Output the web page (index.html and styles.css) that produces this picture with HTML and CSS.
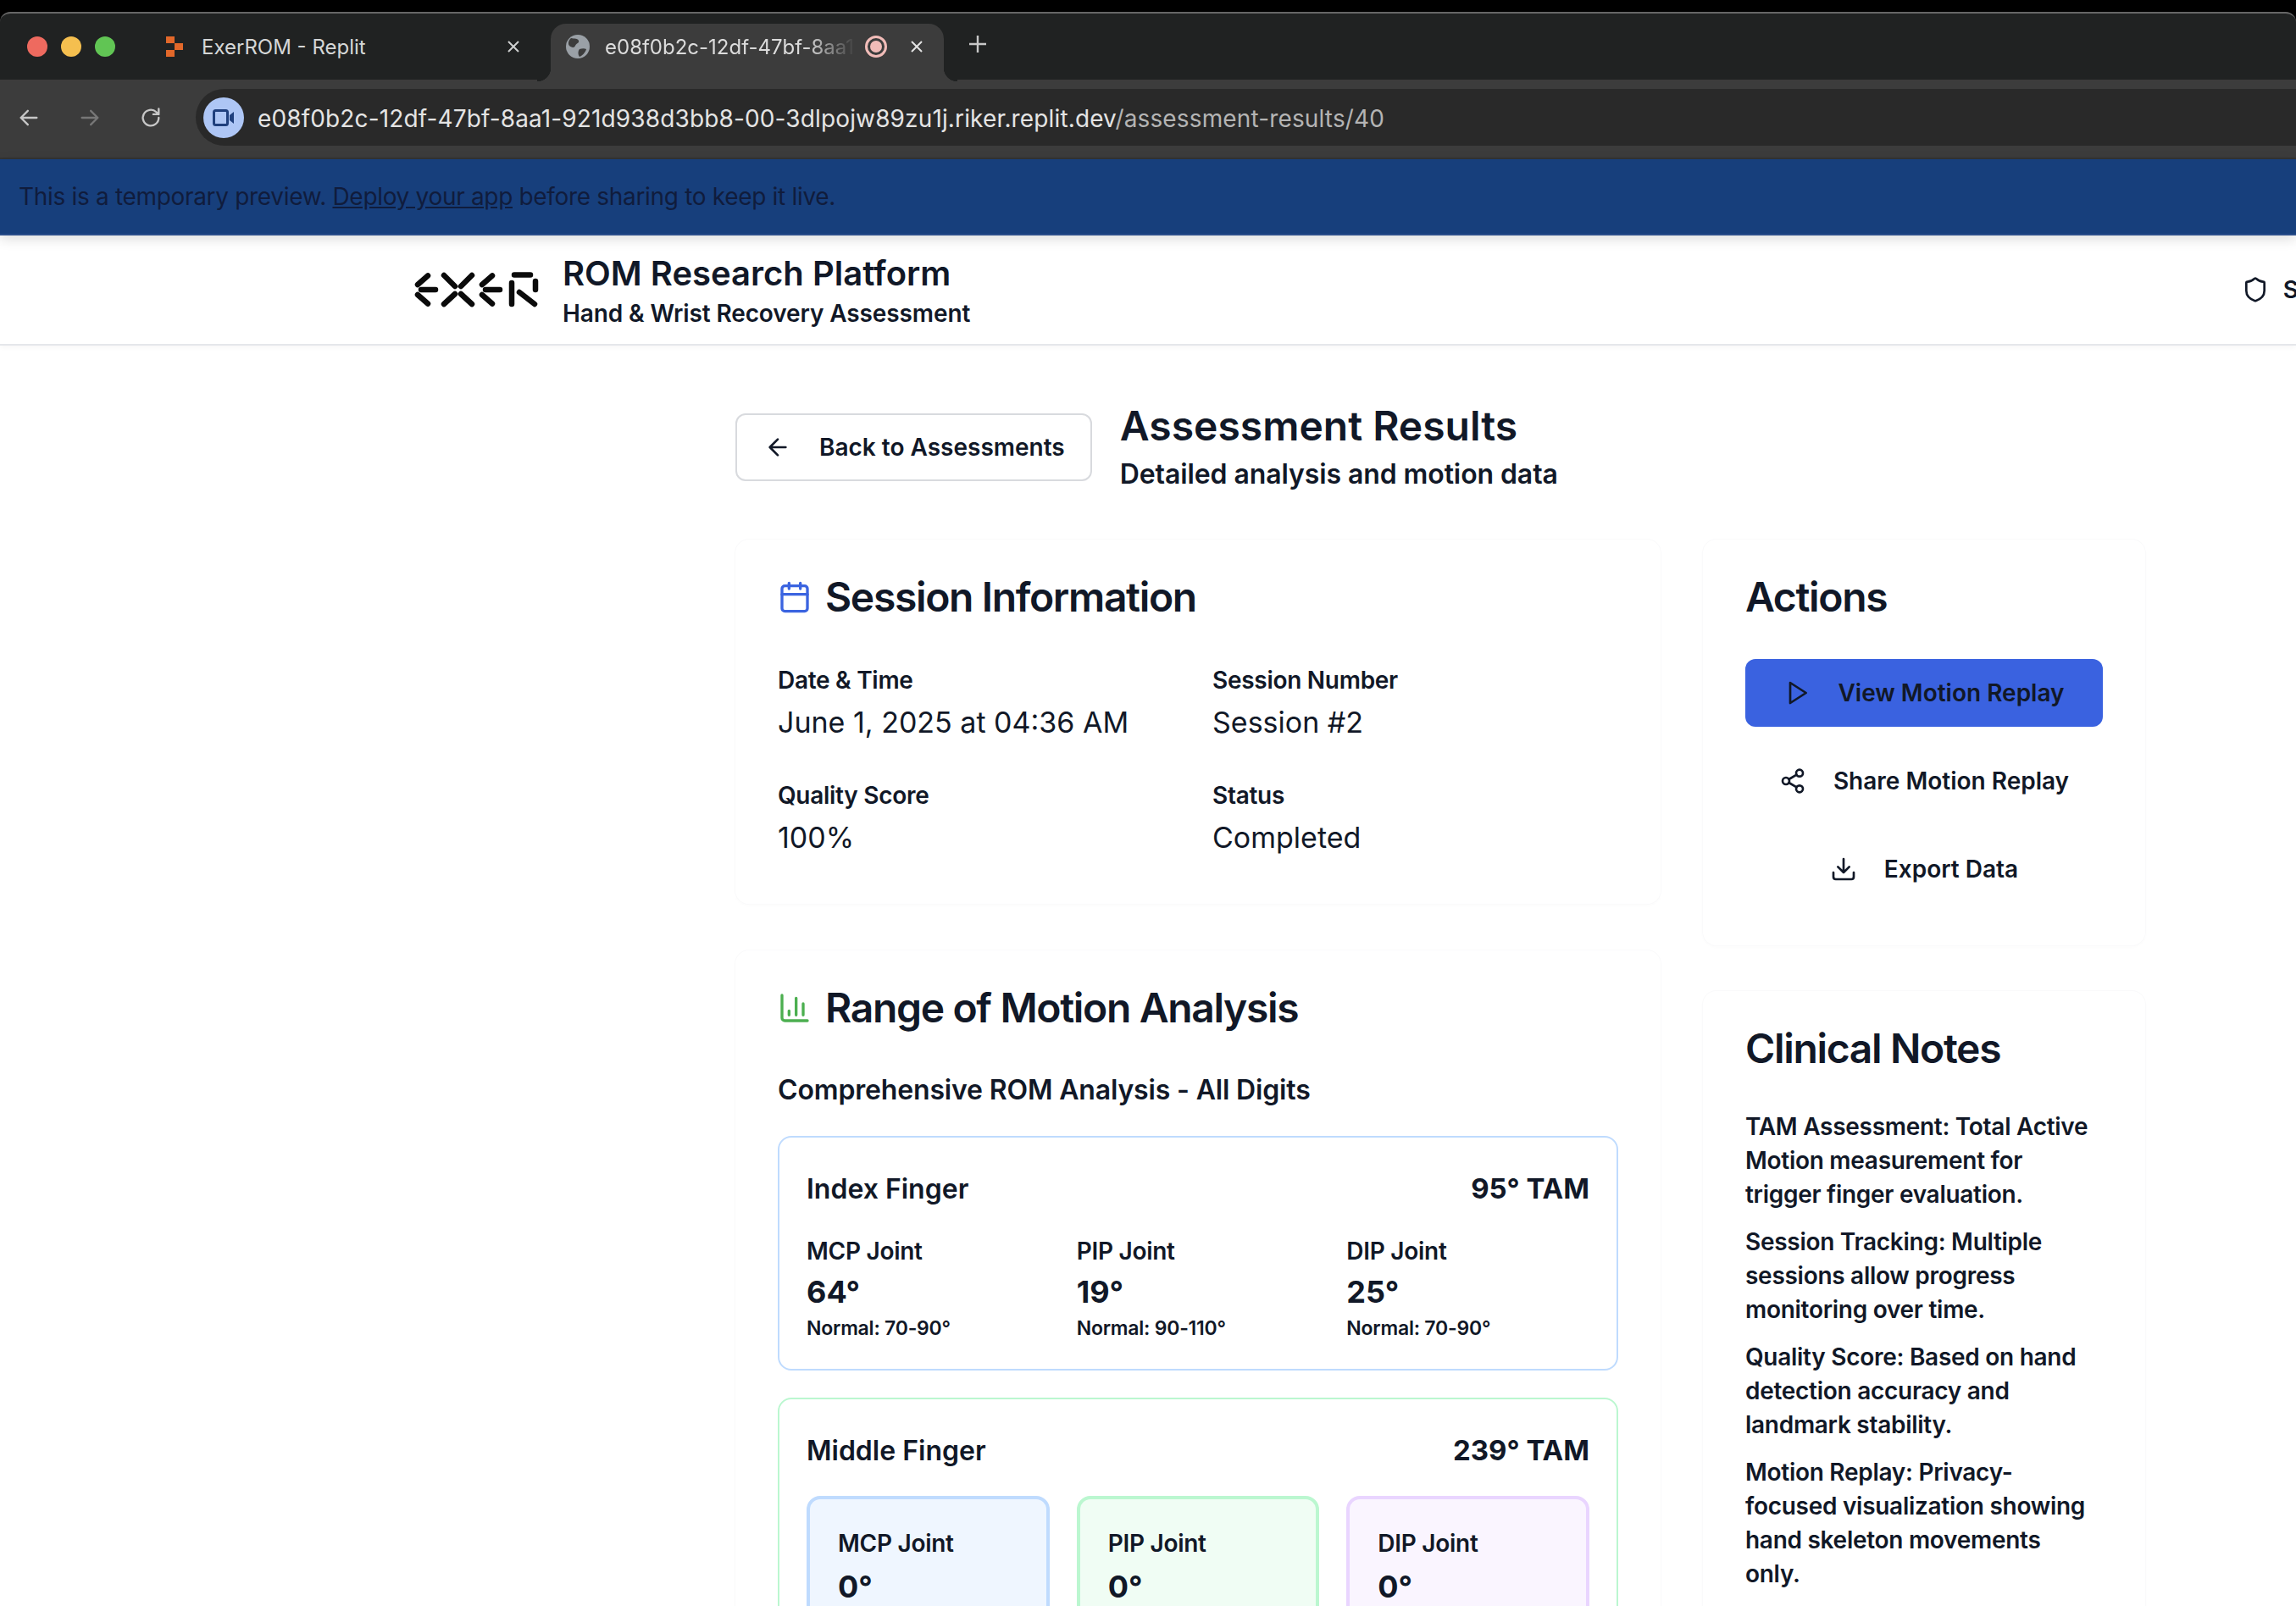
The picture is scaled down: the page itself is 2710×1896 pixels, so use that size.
FILE: index.html
```html
<!DOCTYPE html>
<html lang="en">
<head>
    <meta charset="UTF-8">
    <title>Assessment Results</title>
    <link rel="stylesheet" href="styles.css">
</head>
<body>
    <div class="chrome">
        <div class="tabstrip">
            <div class="lights">
                <span class="light red"></span>
                <span class="light yellow"></span>
                <span class="light green"></span>
            </div>
            <div class="tab">
                <svg class="tab-icon" width="20" height="24" viewBox="0 0 20 24"><path d="M0 0h10v8H0zM10 8h10v8H10zM0 16h10v8H0z" fill="#e2682a"/></svg>
                <span class="tab-title">ExerROM - Replit</span>
                <svg class="tab-close" width="20" height="20" viewBox="0 0 20 20"><path d="M4 4l12 12M16 4L4 16" stroke="#cfd1d1" stroke-width="2"/></svg>
            </div>
            <div class="tab tab-active">
                <svg class="globe" width="28" height="28" viewBox="0 0 28 28"><circle cx="14" cy="14" r="14" fill="#9aa0a6"/><path d="M6 4c4 1 8 0 9 3s-3 3-4 6-5 2-7 0-1-7 2-9zM16 17c3-1 6-1 8 0-1 4-5 8-8 9-2-2-2-7 0-9z" fill="#3c3c3c"/></svg>
                <span class="tab-title tab-fade">e08f0b2c-12df-47bf-8aa1</span>
                <span class="rec"><span class="rec-dot"></span></span>
                <svg class="tab-close" width="20" height="20" viewBox="0 0 20 20"><path d="M4 4l12 12M16 4L4 16" stroke="#e3e3e3" stroke-width="2"/></svg>
            </div>
            <svg class="new-tab" width="22" height="22" viewBox="0 0 22 22"><path d="M11 1v20M1 11h20" stroke="#c7c7c7" stroke-width="2.4"/></svg>
        </div>
        <div class="toolbar">
            <svg class="nav" width="28" height="28" viewBox="0 0 24 24"><path d="M20 12H4M11 5l-7 7 7 7" stroke="#c7c7c7"/></svg>
            <svg class="nav" width="28" height="28" viewBox="0 0 24 24"><path d="M4 12h16M13 5l7 7-7 7" stroke="#777"/></svg>
            <svg class="nav" width="28" height="28" viewBox="0 0 24 24"><path d="M20 12a8 8 0 1 1-2.5-5.8L20 8.500M20 3v5.500h-5.500" stroke="#c7c7c7"/></svg>
            <div class="omnibox">
                <span class="cam">
                    <svg width="26" height="22" viewBox="0 0 26 22"><rect x="1.500" y="2.500" width="16" height="17" rx="2" fill="none" stroke="#1f3f7d" stroke-width="3"/><path d="M20 8l5-4v14l-5-4z" fill="#1f3f7d"/></svg>
                </span>
                <span class="url">e08f0b2c-12df-47bf-8aa1-921d938d3bb8-00-3dlpojw89zu1j.riker.replit.dev<span class="url-path">/assessment-results/40</span></span>
            </div>
        </div>
    </div>

    <div class="banner">This is a temporary preview. <a href="#" class="banner-link">Deploy your app</a> before sharing to keep it live.</div>

    <header class="site-header">
        <svg class="logo" width="148" height="42" viewBox="0 0 148 42">
            <g stroke="#0b0b0b" stroke-width="6.500" stroke-linecap="round" fill="none">
                <path d="M17 4.500L5 15M5 27l12 10.500M9 21h17"/>
                <path d="M36 4l13 13M69 4L56 17M49 26L36 38M56 26l13 12"/>
                <path d="M93 4.500L81 15M81 27l12 10.500M85 21h17"/>
                <path d="M119 3.500h19M116 13v25M144 11v10M125 24l18 14"/>
            </g>
        </svg>
        <div class="brand">
            <h1 class="brand-title">ROM Research Platform</h1>
            <p class="brand-sub">Hand &amp; Wrist Recovery Assessment</p>
        </div>
        <div class="header-right">
            <svg class="icon" width="32" height="32" viewBox="0 0 24 24"><path d="M20 13c0 5-3.500 7.500-7.700 8.900a1 1 0 0 1-.6 0C7.500 20.500 4 18 4 13V6a1 1 0 0 1 1-1c2 0 4.500-1.200 6.200-2.700a1.200 1.200 0 0 1 1.600 0C14.500 3.800 17 5 19 5a1 1 0 0 1 1 1z"/></svg>
            <span>S</span>
        </div>
    </header>

    <main class="page">
        <div class="page-head">
            <a href="#" class="back-btn">
                <svg class="icon" width="32" height="32" viewBox="0 0 24 24"><path d="M19 12H5M12 19l-7-7 7-7"/></svg>
                Back to Assessments
            </a>
            <div>
                <h2 class="page-title">Assessment Results</h2>
                <p class="page-sub">Detailed analysis and motion data</p>
            </div>
        </div>

        <div class="columns">
            <div class="col-main">
                <section class="card session-card">
                    <h3 class="card-title">
                        <svg class="icon icon-blue" width="40" height="40" viewBox="0 0 24 24"><path d="M8 2v4M16 2v4"/><rect x="3" y="4" width="18" height="18" rx="2"/><path d="M3 10h18"/></svg>
                        Session Information
                    </h3>
                    <div class="fields">
                        <div>
                            <div class="field-label">Date &amp; Time</div>
                            <div class="field-value">June 1, 2025 at 04:36 AM</div>
                        </div>
                        <div>
                            <div class="field-label">Session Number</div>
                            <div class="field-value">Session #2</div>
                        </div>
                        <div>
                            <div class="field-label">Quality Score</div>
                            <div class="field-value">100%</div>
                        </div>
                        <div>
                            <div class="field-label">Status</div>
                            <div class="field-value">Completed</div>
                        </div>
                    </div>
                </section>

                <section class="card">
                    <h3 class="card-title">
                        <svg class="icon icon-green" width="40" height="40" viewBox="0 0 24 24"><path d="M3 3v16a2 2 0 0 0 2 2h16M8 17v-3M13 17V5M18 17V9"/></svg>
                        Range of Motion Analysis
                    </h3>
                    <h4 class="rom-title">Comprehensive ROM Analysis - All Digits</h4>

                    <div class="finger finger-blue">
                        <div class="finger-head">
                            <span class="finger-name">Index Finger</span>
                            <span class="finger-tam">95° TAM</span>
                        </div>
                        <div class="joints">
                            <div>
                                <div class="joint-name">MCP Joint</div>
                                <div class="joint-value">64°</div>
                                <div class="joint-normal">Normal: 70-90°</div>
                            </div>
                            <div>
                                <div class="joint-name">PIP Joint</div>
                                <div class="joint-value">19°</div>
                                <div class="joint-normal">Normal: 90-110°</div>
                            </div>
                            <div>
                                <div class="joint-name">DIP Joint</div>
                                <div class="joint-value">25°</div>
                                <div class="joint-normal">Normal: 70-90°</div>
                            </div>
                        </div>
                    </div>

                    <div class="finger finger-green">
                        <div class="finger-head">
                            <span class="finger-name">Middle Finger</span>
                            <span class="finger-tam">239° TAM</span>
                        </div>
                        <div class="joints">
                            <div class="joint-box box-blue">
                                <div class="joint-name">MCP Joint</div>
                                <div class="joint-value">0°</div>
                            </div>
                            <div class="joint-box box-green">
                                <div class="joint-name">PIP Joint</div>
                                <div class="joint-value">0°</div>
                            </div>
                            <div class="joint-box box-purple">
                                <div class="joint-name">DIP Joint</div>
                                <div class="joint-value">0°</div>
                            </div>
                        </div>
                    </div>
                </section>
            </div>

            <aside class="col-side">
                <section class="card actions-card">
                    <h3 class="card-title">Actions</h3>
                    <div class="actions">
                        <a href="#" class="action action-primary">
                            <svg class="icon" width="32" height="32" viewBox="0 0 24 24"><path d="M6 3l14 9-14 9z"/></svg>
                            View Motion Replay
                        </a>
                        <a href="#" class="action">
                            <svg class="icon" width="32" height="32" viewBox="0 0 24 24"><circle cx="18" cy="5" r="3"/><circle cx="6" cy="12" r="3"/><circle cx="18" cy="19" r="3"/><path d="M8.600 13.500l6.800 4M15.400 6.500l-6.800 4"/></svg>
                            Share Motion Replay
                        </a>
                        <a href="#" class="action">
                            <svg class="icon" width="32" height="32" viewBox="0 0 24 24"><path d="M21 15v4a2 2 0 0 1-2 2H5a2 2 0 0 1-2-2v-4M7 10l5 5 5-5M12 15V3"/></svg>
                            Export Data
                        </a>
                    </div>
                </section>

                <section class="card">
                    <h3 class="card-title">Clinical Notes</h3>
                    <div class="notes">
                        <p>TAM Assessment: Total Active Motion measurement for trigger finger evaluation.</p>
                        <p>Session Tracking: Multiple sessions allow progress monitoring over time.</p>
                        <p>Quality Score: Based on hand detection accuracy and landmark stability.</p>
                        <p>Motion Replay: Privacy-focused visualization showing hand skeleton movements only.</p>
                    </div>
                </section>
            </aside>
        </div>
    </main>
</body>
</html>
```

FILE: styles.css
```css
* { box-sizing: border-box; }
html, body { height: 1896px; overflow: hidden; }
body { margin: 0; background: #fff; color: #111827; font-family: Inter, "Liberation Sans", sans-serif; }
h1, h2, h3, h4, p { margin: 0; }
a { color: inherit; text-decoration: none; }

.icon { fill: none; stroke: currentColor; stroke-width: 2; stroke-linecap: round; stroke-linejoin: round; flex: none; }
.icon-blue { color: #3b64e0; }
.icon-green { color: #4caf50; }

/* browser chrome */
.chrome { background: #000; padding-top: 14px; }
.tabstrip { display: flex; align-items: flex-start; height: 80px; padding-top: 12px; background: #202222; border-top: 2px solid #666; border-radius: 12px 12px 0 0; }
.lights { display: flex; gap: 16px; width: 196px; padding: 15px 0 0 32px; flex: none; }
.light { width: 24px; height: 24px; border-radius: 50%; }
.red { background: #ee6a5f; }
.yellow { background: #f5bf4f; }
.green { background: #61c554; }
.tab { display: flex; align-items: center; height: 68px; width: 454px; padding-bottom: 14px; color: #d5d7d7; font-size: 24px; flex: none; }
.tab-icon { margin-right: 22px; flex: none; }
.tab-title { flex: 1; white-space: nowrap; overflow: hidden; }
.tab-close { flex: none; margin-right: 34px; }
.tab-active { position: relative; width: 464px; padding-left: 18px; background: #3c3c3c; border-radius: 18px 18px 0 0; color: #dcdcdc; }
.tab-active .tab-close { margin-right: 22px; }
.tab-active::before, .tab-active::after { content: ""; position: absolute; bottom: 0; width: 16px; height: 16px; }
.tab-active::before { left: -16px; background: radial-gradient(circle at 0 0, #202222 16px, #3c3c3c 16.500px); }
.tab-active::after { right: -16px; background: radial-gradient(circle at 100% 0, #202222 16px, #3c3c3c 16.500px); }
.globe { flex: none; margin-right: 18px; }
.tab-fade { width: 296px; flex: none; -webkit-mask-image: linear-gradient(to right, #000 80%, transparent 100%); mask-image: linear-gradient(to right, #000 80%, transparent 100%); }
.rec { display: flex; align-items: center; justify-content: center; width: 26px; height: 26px; margin: 0 25px 0 11px; border: 3px solid #f1bcb8; border-radius: 50%; flex: none; }
.rec-dot { width: 14px; height: 14px; border-radius: 50%; background: #f1bcb8; }
.new-tab { margin: 13px 0 0 29px; flex: none; }

.toolbar { display: flex; align-items: center; height: 94px; padding: 12px 0 15px 20px; background: #3c3c3c; border-bottom: 2px solid #333; }
.nav { fill: none; stroke-width: 2; stroke-linecap: round; stroke-linejoin: round; margin-right: 44px; flex: none; }
.nav:nth-child(3) { margin-right: 39px; }
.omnibox { flex: 1; display: flex; align-items: center; height: 67px; padding-left: 9px; background: #292929; border-radius: 34px 0 0 34px; }
.cam { display: flex; align-items: center; justify-content: center; width: 48px; height: 48px; margin-right: 16px; border-radius: 50%; background: #aec6f5; }
.url { padding-top: 3px; color: #e4e4e4; font-size: 28px; letter-spacing: 0.14px; white-space: nowrap; }
.url-path { color: #b4b4b4; }

.banner { position: relative; height: 90px; padding: 26px 0 0 22px; background: #173f7c; border-bottom: 2px solid #2a4d8a; box-shadow: 0 4px 14px rgba(0, 0, 0, 0.14); color: #101c3c; font-size: 28px; letter-spacing: -0.32px; line-height: 36px; }
.banner-link { text-decoration: underline; }

/* site header */
.site-header { display: flex; align-items: center; height: 130px; padding-left: 488px; border-bottom: 2px solid #e5e7eb; box-shadow: 0 2px 6px rgba(0, 0, 0, 0.04); }
.logo { flex: none; margin-right: 28px; }
.brand { padding-top: 5px; }
.brand-title { font-size: 40px; line-height: 48px; font-weight: 600; }
.brand-sub { margin-top: 3px; font-size: 28px; line-height: 40px; font-weight: 600; letter-spacing: -0.004em; }
.header-right { display: flex; align-items: center; gap: 17px; margin-left: auto; margin-right: -3px; font-size: 28px; font-weight: 600; }

/* page */
.page { padding: 67px 0 0 868px; }
.page-head { display: flex; align-items: center; gap: 33px; margin-bottom: 53px; }
.back-btn { display: flex; align-items: center; gap: 33px; height: 80px; margin-top: -4px; padding: 0 30px 0 32px; border: 2px solid #d8dade; border-radius: 12px; font-size: 28px; font-weight: 600; }
.page-title { font-size: 48px; line-height: 56px; font-weight: 600; }
.page-sub { margin-top: 5px; font-size: 32px; line-height: 48px; font-weight: 600; letter-spacing: -0.003em; }

.columns { display: flex; align-items: flex-start; gap: 50px; }
.col-main { width: 1092px; flex: none; display: flex; flex-direction: column; gap: 55px; }
.col-side { width: 522px; flex: none; display: flex; flex-direction: column; gap: 54px; }
.card { padding: 40px 50px 48px; border-radius: 16px; background: #fff; box-shadow: 0 0 0 1px #fafafb, 0 2px 4px rgba(0, 0, 0, 0.02); }
.session-card { padding-bottom: 50px; }
.card-title { display: flex; align-items: center; gap: 16px; font-size: 48px; line-height: 56px; font-weight: 600; letter-spacing: -0.028em; }

.fields { display: grid; grid-template-columns: 513px 1fr; row-gap: 38px; margin-top: 50px; }
.field-label { font-size: 28px; line-height: 40px; font-weight: 600; letter-spacing: -0.01em; }
.field-value { margin-top: 2px; font-size: 34px; line-height: 56px; }

.rom-title { margin: 47px 0 32px; font-size: 32px; line-height: 44px; font-weight: 600; letter-spacing: -0.005em; }
.finger { padding: 32px; border: 2px solid; border-radius: 16px; }
.finger + .finger { margin-top: 32px; }
.finger-blue { border-color: #bfdbfe; }
.finger-green { border-color: #bbf7d0; }
.finger-head { display: flex; align-items: center; justify-content: space-between; height: 56px; margin-bottom: 26px; }
.finger-name { font-size: 32px; font-weight: 600; }
.finger-tam { font-size: 33px; font-weight: 700; }
.joints { display: grid; grid-template-columns: repeat(3, 1fr); gap: 32px; }
.joint-name { font-size: 28px; line-height: 40px; font-weight: 600; letter-spacing: -0.01em; }
.joint-value { margin-top: 4px; font-size: 36px; line-height: 48px; font-weight: 700; }
.joint-normal { margin-top: 3px; font-size: 23px; line-height: 32px; font-weight: 600; letter-spacing: -0.01em; }
.joint-box { padding: 32px 33px; border: 4px solid; border-radius: 16px; }
.joint-box .joint-value { margin-top: 7px; }
.box-blue { background: #eff6ff; border-color: #bfdbfe; }
.box-green { background: #f0fdf4; border-color: #bbf7d0; }
.box-purple { background: #faf5ff; border-color: #e9d5ff; }

.actions { display: flex; flex-direction: column; gap: 24px; margin-top: 45px; }
.action { display: flex; align-items: center; justify-content: center; gap: 32px; height: 80px; border-radius: 12px; font-size: 28px; font-weight: 600; }
.action-primary { background: #3a62e0; }
.actions-card { padding-bottom: 50px; }
.notes { margin-top: 44px; padding-right: 8px; font-size: 28px; line-height: 40px; font-weight: 600; letter-spacing: -0.01em; }
.notes p + p { margin-top: 16px; }
```
